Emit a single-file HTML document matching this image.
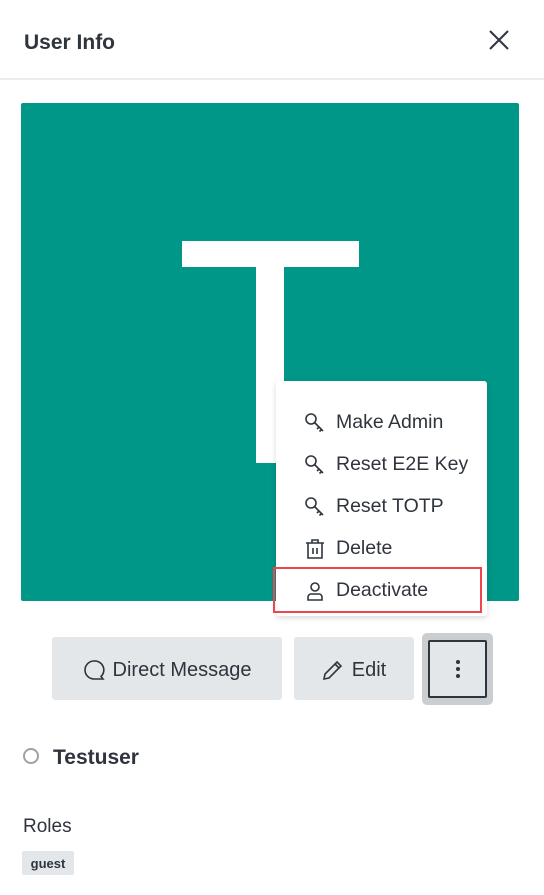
<!DOCTYPE html>
<html><head><style>
*{margin:0;padding:0;box-sizing:border-box}
body{width:544px;height:895px;background:#fff;font-family:"Liberation Sans",sans-serif;color:#2f343d;position:relative;overflow:hidden}
.a{position:absolute}
.hdr{left:0;top:0;width:544px;height:80px;border-bottom:2px solid #ebecef}
.item{position:absolute;left:28px;font-size:19.5px;color:#2f343d;display:flex;align-items:center;gap:10px}
.item svg{width:22px;height:22px}
.btn{background:#e4e7ea;border-radius:3px;display:flex;align-items:center;justify-content:center;font-size:20px;gap:8px;padding-top:3px}
</style></head><body>
<div class="a hdr"></div>
<div class="a" style="left:24px;top:31px;font-size:21px;font-weight:bold">User Info</div>
<svg class="a" style="left:488px;top:29px" width="22" height="22" viewBox="0 0 22 22"><path d="M2 2L20 20M20 2L2 20" stroke="#2f343d" stroke-width="2"/></svg>

<div class="a" style="left:21px;top:103px;width:498px;height:498px;background:#009688;border-radius:2px"></div>
<div class="a" style="left:182px;top:241px;width:177px;height:26px;background:#fff"></div>
<div class="a" style="left:256px;top:266px;width:28px;height:197px;background:#fff"></div>

<div class="a" style="left:276px;top:381px;width:211px;height:235px;background:#fff;border-radius:3px;box-shadow:0 2px 6px rgba(0,0,0,.15)">
  <div class="item" style="top:30px"><svg viewBox="0 0 22 22" fill="none" stroke="#2f343d" stroke-width="1.6"><circle cx="7" cy="7" r="5"/><path d="M10.5 10.5L19 19M15 15l-2 2M17.5 17.5l-2 2"/></svg>Make Admin</div>
  <div class="item" style="top:72px"><svg viewBox="0 0 22 22" fill="none" stroke="#2f343d" stroke-width="1.6"><circle cx="7" cy="7" r="5"/><path d="M10.5 10.5L19 19M15 15l-2 2M17.5 17.5l-2 2"/></svg>Reset E2E Key</div>
  <div class="item" style="top:114px"><svg viewBox="0 0 22 22" fill="none" stroke="#2f343d" stroke-width="1.6"><circle cx="7" cy="7" r="5"/><path d="M10.5 10.5L19 19M15 15l-2 2M17.5 17.5l-2 2"/></svg>Reset TOTP</div>
  <div class="item" style="top:156px"><svg viewBox="0 0 22 22" fill="none" stroke="#2f343d" stroke-width="1.6"><path d="M2 5h18M8 5V2h6v3M4 5v15h14V5M9 10v6M13 10v6"/></svg>Delete</div>
  <div class="item" style="top:198px"><svg viewBox="0 0 22 22" fill="none" stroke="#2f343d" stroke-width="1.6"><circle cx="11" cy="7" r="4"/><path d="M4 20v-3a3 3 0 0 1 3-3h8a3 3 0 0 1 3 3v3z"/></svg>Deactivate</div>
</div>
<div class="a" style="left:273px;top:567px;width:209px;height:46px;border:2px solid #f0454a"></div>

<div class="a btn" style="left:52px;top:637px;width:230px;height:63px"><svg width="22" height="22" viewBox="0 0 22 22" fill="none" stroke="#2f343d" stroke-width="1.6"><path d="M11 2a9 9 0 1 0 0 18h9l-2-2.5A9 9 0 0 0 11 2z"/></svg>Direct Message</div>
<div class="a btn" style="left:294px;top:637px;width:120px;height:63px"><svg width="22" height="22" viewBox="0 0 22 22" fill="none" stroke="#2f343d" stroke-width="1.6"><path d="M2 20l1-5L15 3l4 4L7 19zM13 5l4 4"/></svg>Edit</div>
<div class="a" style="left:422px;top:633px;width:71px;height:72px;background:#cbced1;border-radius:5px"></div>
<div class="a" style="left:428px;top:640px;width:59px;height:58px;border:2.5px solid #2f343d;border-radius:2px;background:#e4e7ea"></div>
<div class="a" style="left:456px;top:660px;width:4px;height:4px;background:#2f343d;border-radius:2px"></div>
<div class="a" style="left:456px;top:667px;width:4px;height:4px;background:#2f343d;border-radius:2px"></div>
<div class="a" style="left:456px;top:674px;width:4px;height:4px;background:#2f343d;border-radius:2px"></div>

<div class="a" style="left:23px;top:748px;width:16px;height:16px;border:2.5px solid #9ea2a8;border-radius:50%"></div>
<div class="a" style="left:53px;top:746px;font-size:21px;font-weight:bold">Testuser</div>
<div class="a" style="left:23px;top:816px;font-size:19px">Roles</div>
<div class="a" style="left:22px;top:851px;width:52px;height:24px;background:#e4e7ea;border-radius:2px;font-size:13px;font-weight:bold;text-align:center;line-height:25px">guest</div>
</body></html>
